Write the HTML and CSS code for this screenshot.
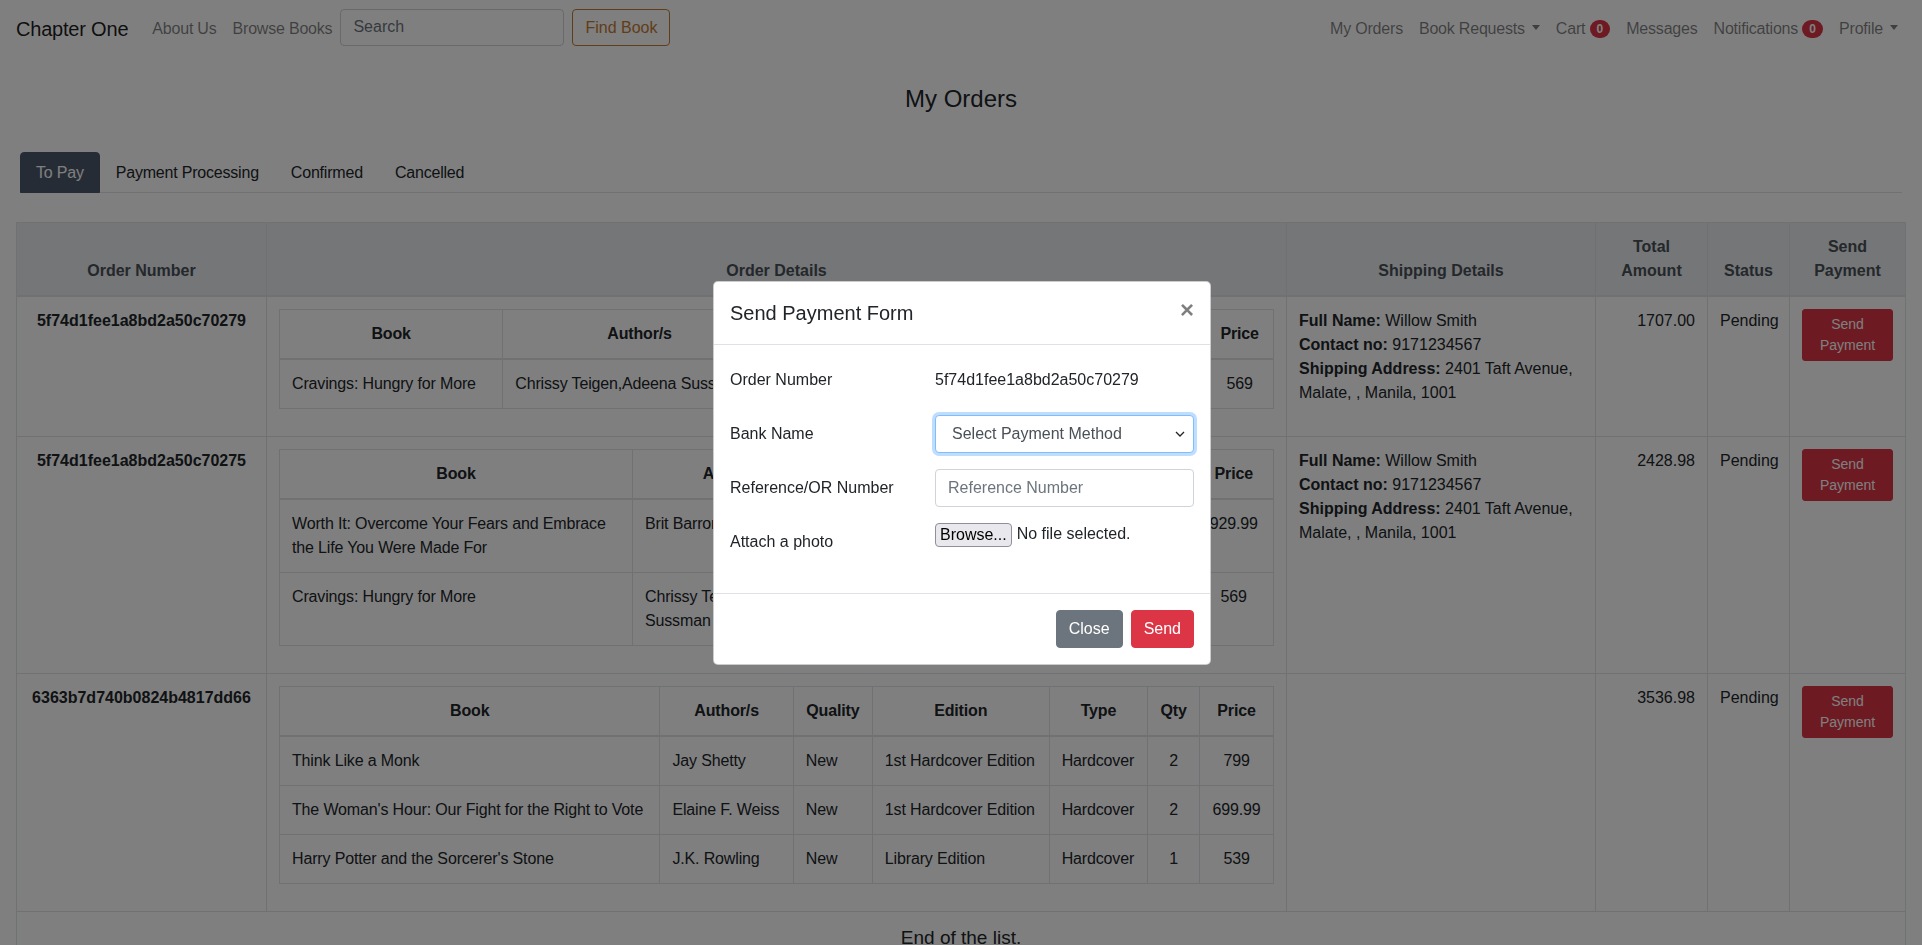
FILE: index.html
```html
<!DOCTYPE html>
<html lang="en">
<head>
<meta charset="utf-8">
<title>My Orders - Chapter One</title>
<link rel="stylesheet" href="styles.css">
</head>
<body>
<nav class="navbar">
  <a class="brand" href="#">Chapter One</a>
  <ul class="nav nav-left">
    <li><a class="nav-link" href="#">About Us</a></li>
    <li><a class="nav-link" href="#">Browse Books</a></li>
  </ul>
  <form class="search">
    <input class="search-input" type="text" placeholder="Search">
    <button class="btn-find" type="button">Find Book</button>
  </form>
  <ul class="nav nav-right">
    <li><a class="nav-link" href="#">My Orders</a></li>
    <li><a class="nav-link" href="#">Book Requests<span class="caret"></span></a></li>
    <li><a class="nav-link" href="#">Cart <span class="badge">0</span></a></li>
    <li><a class="nav-link" href="#">Messages</a></li>
    <li><a class="nav-link" href="#">Notifications <span class="badge">0</span></a></li>
    <li><a class="nav-link" href="#">Profile<span class="caret"></span></a></li>
  </ul>
</nav>

<main>
  <h4 class="page-title">My Orders</h4>

  <ul class="tabs">
    <li><a class="tab active" href="#">To Pay</a></li>
    <li><a class="tab" href="#">Payment Processing</a></li>
    <li><a class="tab" href="#">Confirmed</a></li>
    <li><a class="tab" href="#">Cancelled</a></li>
  </ul>

  <table class="orders">
    <colgroup>
      <col class="c-num"><col class="c-details"><col class="c-ship"><col class="c-total"><col class="c-status"><col class="c-pay">
    </colgroup>
    <thead>
      <tr>
        <th>Order Number</th>
        <th>Order Details</th>
        <th>Shipping Details</th>
        <th>Total Amount</th>
        <th>Status</th>
        <th>Send Payment</th>
      </tr>
    </thead>
    <tbody>
      <tr>
        <td class="order-id">5f74d1fee1a8bd2a50c70279</td>
        <td>
          <table class="items">
            <thead><tr><th>Book</th><th>Author/s</th><th>Quality</th><th>Edition</th><th>Type</th><th>Qty</th><th>Price</th></tr></thead>
            <tbody>
              <tr><td>Cravings: Hungry for More</td><td>Chrissy Teigen,Adeena Sussman</td><td class="nw">New</td><td class="nw">1st Hardcover Edition</td><td class="nw">Hardcover</td><td class="num">3</td><td class="num">569</td></tr>
            </tbody>
          </table>
        </td>
        <td class="ship"><b>Full Name:</b> Willow Smith<br><b>Contact no:</b> 9171234567<br><b>Shipping Address:</b> 2401 Taft Avenue, Malate, , Manila, 1001</td>
        <td class="total">1707.00</td>
        <td>Pending</td>
        <td><button class="btn-pay" type="button">Send Payment</button></td>
      </tr>
      <tr>
        <td class="order-id">5f74d1fee1a8bd2a50c70275</td>
        <td>
          <table class="items">
            <thead><tr><th class="book-wide">Book</th><th class="author-wide">Author/s</th><th>Quality</th><th>Edition</th><th>Type</th><th>Qty</th><th>Price</th></tr></thead>
            <tbody>
              <tr><td>Worth It: Overcome Your Fears and Embrace the Life You Were Made For</td><td>Brit Barron</td><td class="nw">New</td><td class="nw">1st Edition</td><td class="nw">Paperback</td><td class="num">2</td><td class="num">929.99</td></tr>
              <tr><td>Cravings: Hungry for More</td><td>Chrissy Teigen,Adeena Sussman</td><td class="nw">New</td><td class="nw">1st Edition</td><td class="nw">Hardcover</td><td class="num">1</td><td class="num">569</td></tr>
            </tbody>
          </table>
        </td>
        <td class="ship"><b>Full Name:</b> Willow Smith<br><b>Contact no:</b> 9171234567<br><b>Shipping Address:</b> 2401 Taft Avenue, Malate, , Manila, 1001</td>
        <td class="total">2428.98</td>
        <td>Pending</td>
        <td><button class="btn-pay" type="button">Send Payment</button></td>
      </tr>
      <tr>
        <td class="order-id">6363b7d740b0824b4817dd66</td>
        <td>
          <table class="items">
            <thead><tr><th>Book</th><th>Author/s</th><th>Quality</th><th>Edition</th><th>Type</th><th>Qty</th><th>Price</th></tr></thead>
            <tbody>
              <tr><td>Think Like a Monk</td><td>Jay Shetty</td><td class="nw">New</td><td class="nw">1st Hardcover Edition</td><td class="nw">Hardcover</td><td class="num">2</td><td class="num">799</td></tr>
              <tr><td>The Woman's Hour: Our Fight for the Right to Vote</td><td>Elaine F. Weiss</td><td class="nw">New</td><td class="nw">1st Hardcover Edition</td><td class="nw">Hardcover</td><td class="num">2</td><td class="num">699.99</td></tr>
              <tr><td>Harry Potter and the Sorcerer's Stone</td><td>J.K. Rowling</td><td class="nw">New</td><td class="nw">Library Edition</td><td class="nw">Hardcover</td><td class="num">1</td><td class="num">539</td></tr>
            </tbody>
          </table>
        </td>
        <td class="ship"></td>
        <td class="total">3536.98</td>
        <td>Pending</td>
        <td><button class="btn-pay" type="button">Send Payment</button></td>
      </tr>
      <tr>
        <td class="end" colspan="6">End of the list.</td>
      </tr>
    </tbody>
  </table>
</main>

<div class="backdrop"></div>

<div class="modal">
  <div class="modal-content">
    <div class="modal-header">
      <h5 class="modal-title">Send Payment Form</h5>
      <button class="close" type="button" aria-label="Close">&times;</button>
    </div>
    <div class="modal-body">
      <div class="form-row">
        <label class="form-label">Order Number</label>
        <div class="plain">5f74d1fee1a8bd2a50c70279</div>
      </div>
      <div class="form-row">
        <label class="form-label">Bank Name</label>
        <div class="select-wrap">
          <select class="select">
            <option>Select Payment Method</option>
          </select>
          <svg class="chevron" width="10" height="6" viewBox="0 0 10 6"><polyline points="1,1 5,5 9,1" fill="none" stroke="#212529" stroke-width="1.3"/></svg>
        </div>
      </div>
      <div class="form-row">
        <label class="form-label">Reference/OR Number</label>
        <input class="text-input" type="text" placeholder="Reference Number">
      </div>
      <div class="form-row">
        <label class="form-label">Attach a photo</label>
        <div class="file"><span class="file-btn">Browse...</span><span class="file-text">No file selected.</span></div>
      </div>
    </div>
    <div class="modal-footer">
      <button class="btn btn-secondary" type="button">Close</button>
      <button class="btn btn-danger" type="button">Send</button>
    </div>
  </div>
</div>
</body>
</html>
```

FILE: styles.css
```css
* { box-sizing: border-box; }

html, body { overflow: hidden; }

body {
  margin: 0;
  font-family: "Liberation Sans", Arial, sans-serif;
  font-size: 16px;
  line-height: 1.5;
  color: #212529;
  background: #fff;
}

a { text-decoration: none; }

/* Navbar */
.navbar {
  display: flex;
  align-items: center;
  height: 54px;
  padding: 0 16px;
  background: #fff;
  letter-spacing: -0.2px;
}
.brand {
  font-size: 20px;
  line-height: 30px;
  padding: 7px 0 3px;
  margin-right: 16px;
  color: rgba(0, 0, 0, .9);
}
.nav {
  display: flex;
  list-style: none;
  margin: 0;
  padding: 0;
}
.nav-right { margin-left: auto; }
.nav-link {
  display: block;
  padding: 10px 8px 6px;
  color: rgba(0, 0, 0, .5);
  white-space: nowrap;
}
.caret {
  display: inline-block;
  margin-left: 7px;
  vertical-align: 4px;
  border-top: 5px solid rgba(0, 0, 0, .5);
  border-left: 4.5px solid transparent;
  border-right: 4.5px solid transparent;
}
.badge {
  display: inline-block;
  padding: 3px 7px;
  font-size: 12px;
  font-weight: 700;
  line-height: 1;
  letter-spacing: 0;
  border-radius: 10rem;
  background: #dc3545;
  color: #fff;
  vertical-align: 1px;
}
.search {
  display: flex;
  gap: 8px;
  margin: 0;
}
.search-input {
  width: 224px;
  height: 37px;
  padding: 6px 12px;
  font: inherit;
  color: #495057;
  border: 1px solid #ced4da;
  border-radius: 4px;
}
.search-input::placeholder { color: #6c757d; }
.btn-find {
  height: 37px;
  padding: 6px 12px;
  font: inherit;
  color: #c47a34;
  background: transparent;
  border: 1px solid #c47a34;
  border-radius: 4px;
}

/* Title and tabs */
.page-title {
  margin: 31px 0 38px;
  font-size: 24px;
  font-weight: 400;
  line-height: 1.2;
  text-align: center;
}
.tabs {
  display: flex;
  list-style: none;
  margin: 0 20px;
  padding: 0;
  border-bottom: 1px solid #dee2e6;
  letter-spacing: -0.2px;
}
.tab {
  display: block;
  padding: 8px 15px 7px;
  margin-bottom: -1px;
  color: #212529;
  border: 1px solid transparent;
  border-radius: 4px 4px 0 0;
}
.tab.active {
  background: #4c586a;
  border-color: #4c586a;
  color: #fff;
}

/* Orders table */
.orders {
  width: calc(100% - 32px);
  margin: 29px 16px 0;
  border-collapse: collapse;
  table-layout: fixed;
}
.c-num { width: 250px; }
.c-ship { width: 309px; }
.c-total { width: 112px; }
.c-status { width: 82px; }
.c-pay { width: 116px; }

.orders > thead > tr > th,
.orders > tbody > tr > td {
  padding: 12px;
  border: 1px solid #dee2e6;
  vertical-align: top;
}
.orders > thead > tr > th {
  vertical-align: bottom;
  border-bottom-width: 2px;
  background: #e9ecef;
  color: #495057;
  text-align: center;
}
.orders > tbody > tr > td.order-id {
  font-weight: 700;
  text-align: center;
}
.orders > tbody > tr > td.total { text-align: right; }
.orders > tbody > tr > td.end {
  text-align: center;
  font-size: 19px;
}

.items {
  width: 100%;
  border-collapse: collapse;
  margin-bottom: 15px;
  letter-spacing: -0.15px;
}
.items th,
.items td {
  padding: 12px;
  border: 1px solid #dee2e6;
  vertical-align: top;
  text-align: left;
}
.items th {
  vertical-align: bottom;
  border-bottom-width: 2px;
  text-align: center;
}
.items th.book-wide { width: 353px; }
.items th.author-wide { width: 205px; }
.items td.nw { white-space: nowrap; }
.items td.num {
  text-align: center;
  white-space: nowrap;
}

.btn-pay {
  display: block;
  width: 100%;
  padding: 4px 8px;
  font-family: inherit;
  font-size: 14px;
  line-height: 1.5;
  color: #fff;
  background: #dc3545;
  border: 1px solid #dc3545;
  border-radius: 3px;
}

/* Modal */
.backdrop {
  position: fixed;
  inset: 0;
  background: rgba(0, 0, 0, .5);
}
.modal {
  position: fixed;
  inset: 0;
  display: flex;
  align-items: center;
  justify-content: center;
}
.modal-content {
  width: 498px;
  margin-left: 2px;
  background: #fff;
  border: 1px solid rgba(0, 0, 0, .2);
  border-radius: 5px;
}
.modal-header {
  display: flex;
  align-items: flex-start;
  padding: 16px;
  border-bottom: 1px solid #dee2e6;
}
.modal-title {
  margin: 0;
  font-size: 20px;
  font-weight: 500;
  line-height: 1.5;
}
.close {
  margin: -16px -16px -16px auto;
  padding: 16px;
  font-family: inherit;
  font-size: 24px;
  font-weight: 700;
  line-height: 1;
  color: #000;
  opacity: .5;
  background: transparent;
  border: 0;
}
.modal-body { padding: 16px; }
.form-row {
  display: grid;
  grid-template-columns: 175px 1fr;
  column-gap: 30px;
  margin-bottom: 16px;
}
.form-label,
.plain {
  padding: 7px 0;
  line-height: 24px;
}
.select-wrap { position: relative; }
.select {
  display: block;
  width: 100%;
  height: 38px;
  padding: 6px 28px 6px 16px;
  font: inherit;
  color: #495057;
  background: #fff;
  border: 1px solid #80bdff;
  border-radius: 4px;
  box-shadow: 0 0 0 3px rgba(0, 123, 255, .25);
  appearance: none;
  -webkit-appearance: none;
}
.chevron {
  position: absolute;
  right: 9px;
  top: 16px;
}
.text-input {
  display: block;
  width: 100%;
  height: 38px;
  padding: 6px 12px;
  font: inherit;
  color: #495057;
  border: 1px solid #ced4da;
  border-radius: 4px;
}
.text-input::placeholder { color: #6c757d; }
.file {
  display: flex;
  align-items: flex-start;
  line-height: 22px;
}
.file-btn {
  padding: 0 4px;
  background: #e9e9ed;
  border: 1px solid #8f8f9d;
  border-radius: 4px;
  color: #000;
}
.file-text { margin-left: 5px; }
.modal-footer {
  display: flex;
  justify-content: flex-end;
  align-items: center;
  padding: 12px;
  border-top: 1px solid #dee2e6;
}
.btn {
  margin: 4px;
  padding: 6px 12px;
  font: inherit;
  line-height: 24px;
  color: #fff;
  border: 1px solid transparent;
  border-radius: 4px;
}
.btn-secondary { background: #6c757d; border-color: #6c757d; }
.btn-danger { background: #dc3545; border-color: #dc3545; }
```
